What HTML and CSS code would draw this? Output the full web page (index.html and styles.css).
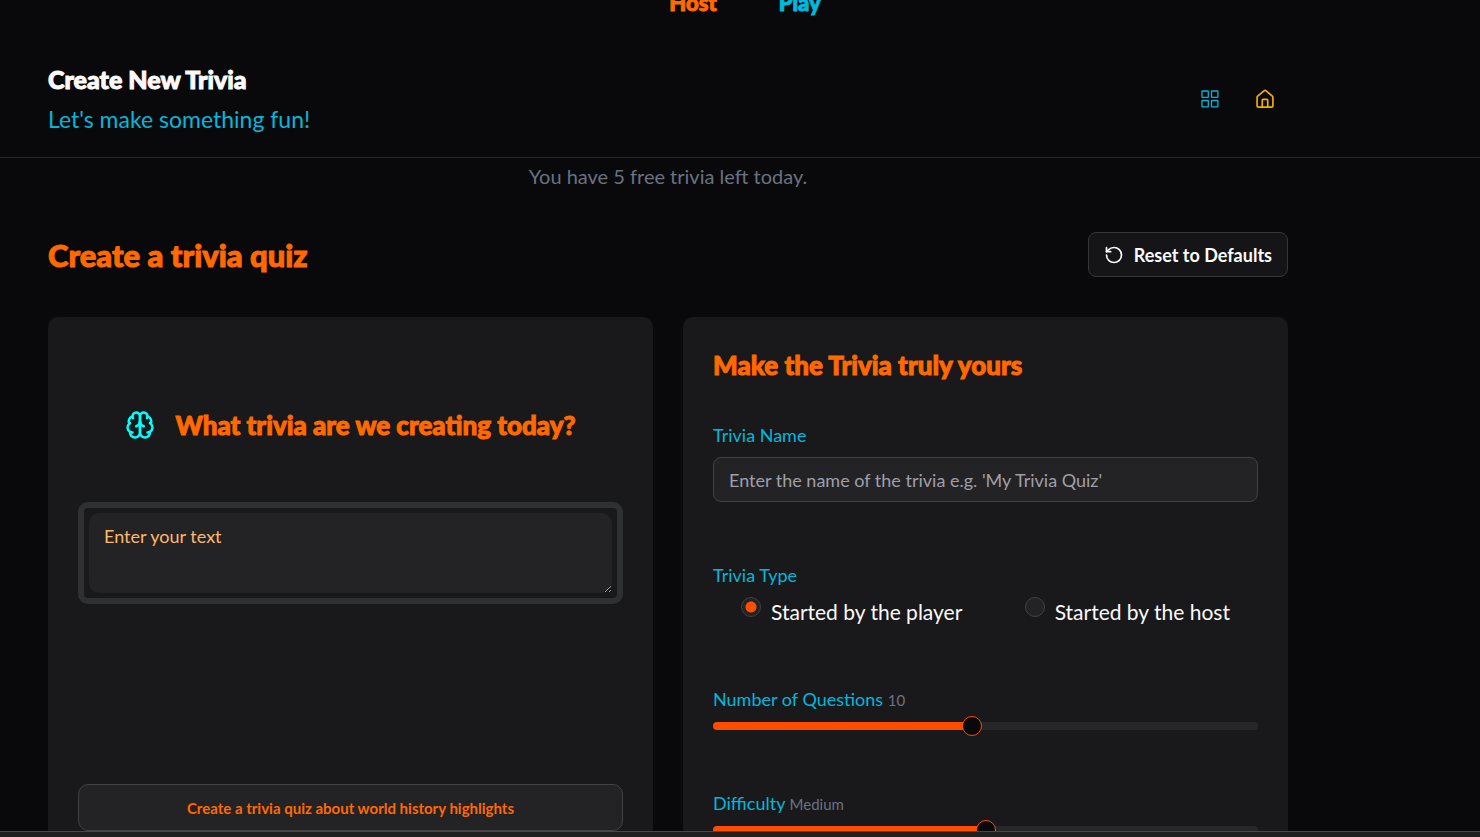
FILE: index.html
```html
<!DOCTYPE html>
<html lang="en">
<head>
<meta charset="utf-8">
<meta name="viewport" content="width=device-width, initial-scale=1">
<title>Create New Trivia</title>
<link rel="stylesheet" href="styles.css">
</head>
<body>
<div class="viewport">
  <nav class="mode-nav">
    <a class="mode-host" href="#host">Host</a>
    <a class="mode-play" href="#play">Play</a>
  </nav>
  <header class="page-header">
    <div class="header-inner">
      <div>
        <h1 class="page-title">Create New Trivia</h1>
        <p class="tagline">Let's make something fun!</p>
      </div>
      <div class="header-actions">
        <a class="icon-link cyan" href="#dashboard" aria-label="Dashboard">
          <svg width="20" height="20" viewBox="0 0 20 20" fill="none" stroke="currentColor" stroke-width="1.300" stroke-linejoin="round"><rect x="1.900" y="2" width="6.400" height="6.400" rx=".6"/><rect x="11.500" y="2" width="6.400" height="6.400" rx=".6"/><rect x="1.900" y="11.500" width="6.400" height="6.400" rx=".6"/><rect x="11.500" y="11.500" width="6.400" height="6.400" rx=".6"/></svg>
        </a>
        <a class="icon-link yellow" href="#home" aria-label="Home">
          <svg width="20" height="20" viewBox="0 0 24 24" fill="none" stroke="currentColor" stroke-width="2" stroke-linecap="round" stroke-linejoin="round"><path d="M2.500 10a2 2 0 0 1 .700-1.500l7.500-6.300a2 2 0 0 1 2.600 0l7.500 6.300a2 2 0 0 1 .700 1.500v9.800a2 2 0 0 1-2 2h-15a2 2 0 0 1-2-2z"/><path d="M8.700 21.500v-8a1 1 0 0 1 1-1h4.600a1 1 0 0 1 1 1v8"/></svg>
        </a>
      </div>
    </div>
  </header>
  <main class="content">
    <p class="quota">You have 5 free trivia left today.</p>
    <div class="section-head">
      <h2 class="section-title">Create a trivia quiz</h2>
      <button class="reset" type="button">
        <svg width="20" height="20" viewBox="0 0 24 24" fill="none" stroke="currentColor" stroke-width="2" stroke-linecap="round" stroke-linejoin="round"><path d="M3 12a9 9 0 1 0 9-9 9.750 9.750 0 0 0-6.740 2.740L3 8"/><path d="M3 3v5h5"/></svg>
        Reset to Defaults
      </button>
    </div>
    <div class="panels">
      <section class="card prompt-card">
        <div class="prompt-head">
          <svg width="30" height="30" viewBox="0 0 24 24" fill="none" stroke="currentColor" stroke-width="2" stroke-linecap="round" stroke-linejoin="round"><path d="M12 5a3 3 0 1 0-5.997.125 4 4 0 0 0-2.526 5.770 4 4 0 0 0 .556 6.588A4 4 0 1 0 12 18Z"/><path d="M12 5a3 3 0 1 1 5.997.125 4 4 0 0 1 2.526 5.770 4 4 0 0 1-.556 6.588A4 4 0 1 1 12 18Z"/><path d="M15 13a4.500 4.500 0 0 1-3-4 4.500 4.500 0 0 1-3 4"/><path d="M17.599 6.500a3 3 0 0 0 .399-1.375"/><path d="M6.003 5.125A3 3 0 0 0 6.401 6.500"/><path d="M3.477 10.896a4 4 0 0 1 .585-.396"/><path d="M19.938 10.500a4 4 0 0 1 .585.396"/><path d="M6 18a4 4 0 0 1-1.967-.516"/><path d="M19.967 17.484A4 4 0 0 1 18 18"/></svg>
          <h3 class="card-title">What trivia are we creating today?</h3>
        </div>
        <div class="prompt-box">
          <textarea class="prompt-input" aria-label="Trivia prompt" placeholder="Enter your text"></textarea>
        </div>
        <button class="suggestion" type="button">Create a trivia quiz about world history highlights</button>
      </section>
      <form class="card settings">
        <h3 class="card-title">Make the Trivia truly yours</h3>
        <div class="field name-field">
          <label class="label" for="trivia-name">Trivia Name</label>
          <input class="text-input" id="trivia-name" type="text" placeholder="Enter the name of the trivia e.g. 'My Trivia Quiz'">
        </div>
        <fieldset class="field type-field">
          <legend class="label">Trivia Type</legend>
          <div class="choices">
            <label class="choice"><input class="radio" type="radio" name="type" checked><span>Started by the player</span></label>
            <label class="choice"><input class="radio" type="radio" name="type"><span>Started by the host</span></label>
          </div>
        </fieldset>
        <div class="field range-field">
          <label class="label" for="count">Number of Questions <span class="value">10</span></label>
          <input class="slider" id="count" type="range" min="1" max="20" value="10" style="--fill: 47.4%">
        </div>
        <div class="field range-field">
          <label class="label" for="difficulty">Difficulty <span class="value">Medium</span></label>
          <input class="slider" id="difficulty" type="range" min="0" max="2" value="1" style="--fill: 50%">
        </div>
      </form>
    </div>
  </main>
</div>
<div class="dock"></div>
</body>
</html>
```
FILE: styles.css
```css
* { box-sizing: border-box; }
body {
  margin: 0;
  height: 100vh;
  display: flex;
  flex-direction: column;
  background: #09090b;
  color: #fafafa;
  font-family: Lato, "Open Sans", sans-serif;
  font-size: 18px;
  line-height: 24px;
}
h1, h2, h3, p, fieldset { margin: 0; padding: 0; border: 0; }
button, input, textarea { font: inherit; color: inherit; margin: 0; }
a { text-decoration: none; }
svg { display: block; flex: none; }

.viewport { flex: 1; min-height: 0; overflow: hidden; }
.dock { height: 6px; background: #202020; border-top: 1px solid #484848; }

.mode-nav, .page-title, .section-title, .card-title {
  font-weight: 900;
  -webkit-text-stroke: 1px currentColor;
}

.mode-nav {
  display: flex;
  justify-content: center;
  gap: 62px;
  margin-top: -11px;
  padding-left: 10px;
  font-size: 22px;
  line-height: 28px;
}
.mode-host { color: #ff6900; }
.mode-play { color: #00b8db; }

.page-header { margin-top: 40px; border-bottom: 1px solid #27272a; }
.header-inner {
  display: flex;
  justify-content: space-between;
  align-items: center;
  max-width: 1336px;
  padding: 6px 48px 22px;
}
.page-title { font-size: 25px; line-height: 32px; }
.tagline { margin-top: 8px; font-size: 23px; line-height: 32px; color: #00b8db; }
.header-actions { display: flex; gap: 15px; margin-right: 3px; }
.icon-link { display: grid; place-items: center; width: 40px; height: 40px; }
.cyan { color: #00b8db; }
.yellow { color: #f0b100; }

.content { max-width: 1336px; padding: 0 48px; }
.quota { padding-top: 2px; font-size: 20px; line-height: 32px; text-align: center; color: #6a7282; }
.section-head { display: flex; justify-content: space-between; align-items: center; margin: 40px 0 40px; }
.section-title { font-size: 31px; line-height: 40px; color: #ff6900; }
.reset {
  display: flex;
  align-items: center;
  gap: 10px;
  height: 45px;
  padding: 0 15px;
  border: 1px solid #363638;
  border-radius: 8px;
  background: #151517;
  font-weight: 700;
}
.panels { display: grid; grid-template-columns: 1fr 1fr; gap: 30px; }
.card { min-height: 560px; padding: 30px; border-radius: 10px; background: #19191b; }
.card-title { font-size: 26px; line-height: 36px; color: #ff6900; }

.prompt-head { display: flex; justify-content: center; align-items: center; gap: 20px; padding: 60px 0 0; color: #00ffff; }
.prompt-box { display: flex; margin-top: 59px; padding: 5px; border: 6px solid #2f3032; border-radius: 10px; }
.prompt-input {
  flex: 1;
  min-width: 0;
  height: 80px;
  padding: 11px 15px;
  border: 0;
  border-radius: 10px;
  background: #232325;
  resize: vertical;
}
.prompt-input::placeholder { color: #ffb86a; opacity: 1; }
.suggestion {
  width: 100%;
  height: 47px;
  margin-top: 180px;
  border: 1px solid #424244;
  border-radius: 10px;
  background: #232325;
  color: #ff6900;
  font-size: 15px;
  font-weight: 700;
}

.field { display: flex; flex-direction: column; }
.label { padding: 0; color: #00b8db; }
.name-field { margin-top: 40px; gap: 10px; }
.text-input {
  width: 100%;
  height: 45px;
  padding: 0 15px;
  border: 1px solid #424244;
  border-radius: 8px;
  background: #232325;
}
.text-input::placeholder { color: #9f9fa9; opacity: 1; }
.type-field { margin-top: 61px; }
.choices { display: flex; justify-content: space-between; padding: 10px 28px 5px; }
.choice { display: flex; gap: 10px; font-size: 21px; line-height: 30px; }
.radio {
  appearance: none;
  width: 20px;
  height: 20px;
  border: 1px solid #424244;
  border-radius: 50%;
  background: #232325;
}
.radio:checked { background: radial-gradient(circle, #ff4d00 5px, #232325 6px); }
.range-field { margin-top: 55px; gap: 4px; }
.range-field .value { color: #6a7282; font-size: 15px; }
.slider {
  appearance: none;
  width: 100%;
  height: 20px;
  background: transparent;
}
.slider::-webkit-slider-runnable-track {
  height: 8px;
  border-radius: 4px;
  background: linear-gradient(to right, #ff4d00 var(--fill), #27272a var(--fill));
}
.slider::-webkit-slider-thumb {
  appearance: none;
  width: 20px;
  height: 20px;
  margin-top: -6px;
  border: 1px solid #ff4d00;
  border-radius: 50%;
  background: #09090b;
}
```
